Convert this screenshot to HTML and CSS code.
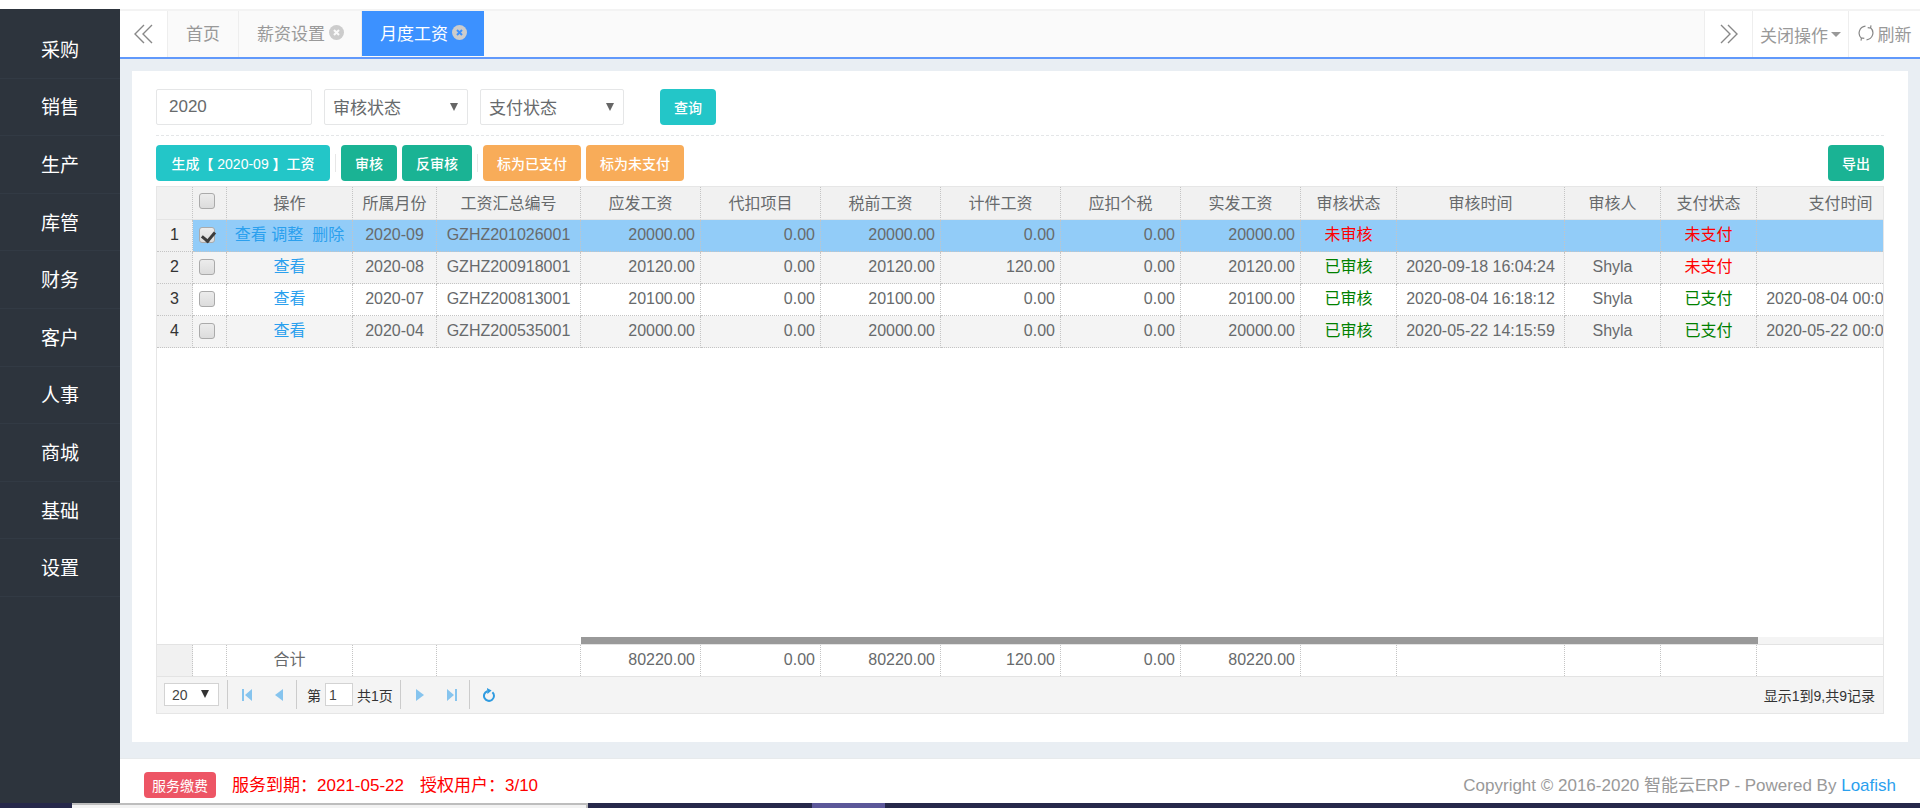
FILE: index.html
```
<!DOCTYPE html>
<html lang="zh-CN">
<head>
  <meta charset="UTF-8">
  <meta name="viewport" content="width=device-width, initial-scale=1.0">
  <title>智能云ERP - 月度工资</title>
  <link rel="stylesheet" href="styles.css">
</head>
<body>
  <div class="app">
    <nav class="sidebar">
      <ul>
        <li><a href="#">采购</a></li>
        <li><a href="#">销售</a></li>
        <li><a href="#">生产</a></li>
        <li><a href="#">库管</a></li>
        <li><a href="#">财务</a></li>
        <li><a href="#">客户</a></li>
        <li><a href="#">人事</a></li>
        <li><a href="#">商城</a></li>
        <li><a href="#">基础</a></li>
        <li><a href="#">设置</a></li>
      </ul>
    </nav>

    <div class="page">
      <header class="tabs">
        <button class="tab-btn roll-left" aria-label="向左">
          <svg width="20" height="20" viewBox="0 0 20 20"><path d="M10 1L1 10l9 9M18 1l-9 9 9 9"/></svg>
        </button>
        <a class="tab" href="#">首页</a>
        <a class="tab" href="#">薪资设置<svg class="close" width="15" height="15" viewBox="0 0 15 15"><circle cx="7.5" cy="7.5" r="7.5"/><path d="M5 5l5 5M10 5l-5 5"/></svg></a>
        <a class="tab active" href="#">月度工资<svg class="close" width="15" height="15" viewBox="0 0 15 15"><circle cx="7.5" cy="7.5" r="7.5"/><path d="M5 5l5 5M10 5l-5 5"/></svg></a>
        <div class="spacer"></div>
        <button class="tab-btn roll-right" aria-label="向右">
          <svg width="20" height="20" viewBox="0 0 20 20"><path d="M2 1l9 9-9 9M9 1l9 9-9 9"/></svg>
        </button>
        <button class="tab-btn close-ops">关闭操作<span class="caret"></span></button>
        <button class="tab-btn refresh">
          <svg width="16" height="16" viewBox="0 0 16 16"><path d="M7.5 1.2A6.9 6.9 0 0 0 3.4 13.2M3 15.6l.5-2.6 2.8.4M8.5 14.8A6.9 6.9 0 0 0 12.6 2.8M13 .4L12.5 3l-2.8-.4"/></svg>刷新
        </button>
      </header>

      <main class="content">
        <div class="panel">
          <form class="search">
            <input class="field" type="text" value="2020" aria-label="年份">
            <span class="select-box">
              <select aria-label="审核状态"><option>审核状态</option><option>未审核</option><option>已审核</option></select>
            </span>
            <span class="select-box">
              <select aria-label="支付状态"><option>支付状态</option><option>未支付</option><option>已支付</option></select>
            </span>
            <button type="button" class="btn info query">查询</button>
          </form>

          <div class="toolbar">
            <button class="btn info generate">生成【 2020-09 】工资</button>
            <i class="sep"></i>
            <button class="btn primary">审核</button>
            <button class="btn primary">反审核</button>
            <i class="sep"></i>
            <button class="btn warning">标为已支付</button>
            <button class="btn warning">标为未支付</button>
            <button class="btn primary export">导出</button>
          </div>

          <div class="grid">
            <div class="grid-view">
              <table>
                <colgroup>
                  <col class="w-num"><col class="w-check"><col class="w-ops"><col class="w-month"><col class="w-code">
                  <col class="w-money" span="6"><col class="w-state"><col class="w-time"><col class="w-state"><col class="w-state"><col class="w-time">
                </colgroup>
                <thead>
                  <tr>
                    <th></th>
                    <th><input type="checkbox" aria-label="全选"></th>
                    <th>操作</th>
                    <th>所属月份</th>
                    <th>工资汇总编号</th>
                    <th>应发工资</th>
                    <th>代扣项目</th>
                    <th>税前工资</th>
                    <th>计件工资</th>
                    <th>应扣个税</th>
                    <th>实发工资</th>
                    <th>审核状态</th>
                    <th>审核时间</th>
                    <th>审核人</th>
                    <th>支付状态</th>
                    <th>支付时间</th>
                  </tr>
                </thead>
                <tbody>
                  <tr class="selected">
                    <td class="num">1</td>
                    <td><input type="checkbox" aria-label="选择第1行" checked></td>
                    <td><a href="#">查看</a> <a href="#">调整</a>&nbsp; <a href="#">删除</a></td>
                    <td>2020-09</td>
                    <td>GZHZ201026001</td>
                    <td class="money">20000.00</td>
                    <td class="money">0.00</td>
                    <td class="money">20000.00</td>
                    <td class="money">0.00</td>
                    <td class="money">0.00</td>
                    <td class="money">20000.00</td>
                    <td class="red">未审核</td>
                    <td></td>
                    <td></td>
                    <td class="red">未支付</td>
                    <td></td>
                  </tr>
                  <tr>
                    <td class="num">2</td>
                    <td><input type="checkbox" aria-label="选择第2行"></td>
                    <td><a href="#">查看</a></td>
                    <td>2020-08</td>
                    <td>GZHZ200918001</td>
                    <td class="money">20120.00</td>
                    <td class="money">0.00</td>
                    <td class="money">20120.00</td>
                    <td class="money">120.00</td>
                    <td class="money">0.00</td>
                    <td class="money">20120.00</td>
                    <td class="green">已审核</td>
                    <td>2020-09-18 16:04:24</td>
                    <td>Shyla</td>
                    <td class="red">未支付</td>
                    <td></td>
                  </tr>
                  <tr>
                    <td class="num">3</td>
                    <td><input type="checkbox" aria-label="选择第3行"></td>
                    <td><a href="#">查看</a></td>
                    <td>2020-07</td>
                    <td>GZHZ200813001</td>
                    <td class="money">20100.00</td>
                    <td class="money">0.00</td>
                    <td class="money">20100.00</td>
                    <td class="money">0.00</td>
                    <td class="money">0.00</td>
                    <td class="money">20100.00</td>
                    <td class="green">已审核</td>
                    <td>2020-08-04 16:18:12</td>
                    <td>Shyla</td>
                    <td class="green">已支付</td>
                    <td>2020-08-04 00:00:00</td>
                  </tr>
                  <tr>
                    <td class="num">4</td>
                    <td><input type="checkbox" aria-label="选择第4行"></td>
                    <td><a href="#">查看</a></td>
                    <td>2020-04</td>
                    <td>GZHZ200535001</td>
                    <td class="money">20000.00</td>
                    <td class="money">0.00</td>
                    <td class="money">20000.00</td>
                    <td class="money">0.00</td>
                    <td class="money">0.00</td>
                    <td class="money">20000.00</td>
                    <td class="green">已审核</td>
                    <td>2020-05-22 14:15:59</td>
                    <td>Shyla</td>
                    <td class="green">已支付</td>
                    <td>2020-05-22 00:00:00</td>
                  </tr>
                </tbody>
              </table>
            </div>
            <div class="scroll-track"><div class="scroll-thumb"></div></div>
            <div class="grid-total">
              <table>
                <colgroup>
                  <col class="w-num"><col class="w-check"><col class="w-ops"><col class="w-month"><col class="w-code">
                  <col class="w-money" span="6"><col class="w-state"><col class="w-time"><col class="w-state"><col class="w-state"><col class="w-time">
                </colgroup>
                <tbody>
                  <tr>
                    <td class="num"></td>
                    <td></td>
                    <td>合计</td>
                    <td></td>
                    <td></td>
                    <td class="money">80220.00</td>
                    <td class="money">0.00</td>
                    <td class="money">80220.00</td>
                    <td class="money">120.00</td>
                    <td class="money">0.00</td>
                    <td class="money">80220.00</td>
                    <td></td>
                    <td></td>
                    <td></td>
                    <td></td>
                    <td></td>
                  </tr>
                </tbody>
              </table>
            </div>
            <div class="pager">
              <span class="select-box small">
                <select aria-label="每页条数"><option>20</option><option>50</option></select>
              </span>
              <i class="line"></i>
              <button aria-label="首页"><svg width="12" height="12" viewBox="0 0 12 12"><path d="M1 0h2v12H1zM11 0v12L4 6z"/></svg></button>
              <button aria-label="上一页"><svg width="12" height="12" viewBox="0 0 12 12"><path d="M10 0v12L2 6z"/></svg></button>
              <i class="line"></i>
              <label class="page-no">第<input type="text" value="1">共1页</label>
              <i class="line"></i>
              <button aria-label="下一页"><svg width="12" height="12" viewBox="0 0 12 12"><path d="M2 0v12l8-6z"/></svg></button>
              <button aria-label="末页"><svg width="12" height="12" viewBox="0 0 12 12"><path d="M9 0h2v12H9zM1 0v12l7-6z"/></svg></button>
              <i class="line"></i>
              <button class="reload" aria-label="刷新"><svg width="14" height="14" viewBox="0 0 14 14"><path class="ring" d="M10.4 4.2A5 5 0 1 1 5.2 3.2"/><path d="M5 0l4.6 2.6L5.4 6z"/></svg></button>
              <span class="page-info">显示1到9,共9记录</span>
            </div>
          </div>
        </div>
      </main>

      <footer class="footer">
        <button class="pay">服务缴费</button>
        <span class="notice">服务到期：2021-05-22</span>
        <span class="notice">授权用户：3/10</span>
        <span class="copyright">Copyright © 2016-2020 智能云ERP - Powered By <a href="#">Loafish</a></span>
      </footer>
    </div>
  </div>
  <div class="taskbar">
    <div class="task-window"></div>
    <div class="task-active"></div>
  </div>
</body>
</html>
```
FILE: styles.css
```
* {
  box-sizing: border-box;
}
body {
  margin: 0;
  padding-top: 9px;
  min-height: 100vh;
  display: flex;
  flex-direction: column;
  overflow: hidden;
  background: #fff;
  color: #676a6c;
  font-family: "Liberation Sans", "Noto Sans CJK SC", sans-serif;
  font-size: 17px;
}
a {
  color: #2ba0ee;
  text-decoration: none;
}
button, input, select {
  font-family: inherit;
  margin: 0;
}
button {
  cursor: pointer;
}
.app {
  flex: 1;
  display: flex;
}

/* sidebar */
.sidebar {
  width: 120px;
  flex: none;
  background: #2d343d;
}
.sidebar ul {
  list-style: none;
  margin: 0;
  padding: 12px 0 0;
  height: 588px;
  display: flex;
  flex-direction: column;
}
.sidebar li {
  flex: 1;
  border-bottom: 1px solid #323a44;
}
.sidebar a {
  display: flex;
  height: 100%;
  align-items: center;
  justify-content: center;
  padding-bottom: 2px;
  color: #fff;
  font-size: 19px;
}
.page {
  flex: 1;
  min-width: 0;
  display: flex;
  flex-direction: column;
  background: #e9eef3;
}

/* tabs */
.tabs {
  height: 50px;
  display: flex;
  background: #fafafa;
  border-top: 2px solid #f3f3f3;
  border-bottom: 2px solid #6199fb;
}
.tab {
  display: flex;
  align-items: center;
  padding: 0 18px 3px;
  border-right: 1px solid #eee;
  color: #999;
}
.tab .close {
  margin-left: 4px;
  margin-right: -1px;
}
.close circle {
  fill: #ccc;
}
.close path {
  stroke: #fafafa;
  stroke-width: 2;
}
.tab.active {
  margin-bottom: 1px;
  padding-bottom: 2px;
  background: #3c91ff;
  border-right: 0;
  color: #fff;
}
.tab.active .close path {
  stroke: #3c91ff;
}
.spacer {
  flex: 1;
}
.tab-btn {
  display: flex;
  align-items: center;
  justify-content: center;
  padding: 0;
  border: 0;
  border-left: 1px solid #eee;
  background: #fff;
  color: #999;
  font-size: 17px;
  white-space: nowrap;
}
.tab-btn svg {
  fill: none;
  stroke: #888;
  stroke-width: 1.4;
}
.roll-left {
  width: 48px;
  border-left: 0;
  border-right: 1px solid #eee;
}
.roll-right {
  width: 48px;
}
.close-ops {
  width: 96px;
}
.refresh {
  width: 72px;
  gap: 4px;
  padding-bottom: 2px;
}
.tab-btn.refresh svg {
  stroke-width: 1.2;
}
.caret {
  margin-left: 3px;
  border: 5px solid transparent;
  border-top-color: #999;
  border-bottom: 0;
}

/* panel */
.content {
  flex: 1;
  display: flex;
  padding: 12px 12px 16px;
}
.panel {
  flex: 1;
  min-width: 0;
  display: flex;
  flex-direction: column;
  padding: 18px 24px 28px;
  background: #fff;
}
.search {
  display: flex;
  gap: 12px;
  padding-bottom: 10px;
  border-bottom: 1px dashed #e4e6e8;
}
.field {
  width: 156px;
  height: 36px;
  padding: 0 12px;
  border: 1px solid #e5e6e7;
  border-radius: 2px;
  color: #676a6c;
  font-size: 17px;
}
.select-box {
  position: relative;
  display: inline-flex;
}
.select-box select {
  appearance: none;
  width: 144px;
  height: 36px;
  padding: 2px 8px 0;
  border: 1px solid #e5e6e7;
  border-radius: 2px;
  background: #fff;
  color: #676a6c;
  font-size: 17px;
}
.select-box::after {
  content: "";
  position: absolute;
  right: 10px;
  top: 14px;
  border: 4px solid transparent;
  border-top: 8px solid #666;
  border-bottom: 0;
  pointer-events: none;
}
.btn {
  height: 36px;
  padding: 0 14px;
  border: 0;
  border-radius: 4px;
  color: #fff;
  font-size: 14px;
  font-weight: 500;
}
.info {
  background: #23c6c8;
}
.primary {
  background: #1ab394;
}
.warning {
  background: #f8ac59;
}
.query {
  margin-left: 24px;
}
.toolbar {
  display: flex;
  align-items: center;
  gap: 5px;
  padding: 9px 0 5px;
}
.generate {
  min-width: 174px;
}
.sep {
  width: 1px;
  height: 18px;
  background: #e7e7e7;
}
.export {
  margin-left: auto;
}

/* data grid */
.grid {
  flex: 1;
  display: flex;
  flex-direction: column;
  border: 1px solid #e6e6e6;
}
.grid-view {
  flex: 1;
  overflow: hidden;
}
.grid-total {
  overflow: hidden;
  border-top: 1px solid #e3e3e3;
  border-bottom: 1px solid #e3e3e3;
}
table {
  width: 1768px;
  table-layout: fixed;
  border-collapse: separate;
  border-spacing: 0;
  font-size: 16px;
  line-height: 20px;
}
.w-num { width: 36px; }
.w-check { width: 34px; }
.w-ops { width: 126px; }
.w-month { width: 84px; }
.w-code { width: 144px; }
.w-money { width: 120px; }
.w-state { width: 96px; }
.w-time { width: 168px; }
th, td {
  height: 32px;
  padding: 0 5px 2px;
  border-right: 1px dotted #c4c4c4;
  border-bottom: 1px dotted #c4c4c4;
  font-weight: normal;
  text-align: center;
  white-space: nowrap;
}
th {
  height: 33px;
  padding: 2px 5px 0;
  background: #f1f1f1;
  border-bottom: 1px solid #e4e4e4;
}
tr:nth-child(even) td {
  background: #f4f4f4;
}
tr.selected td {
  background: #92ccf8;
}
tr td.num {
  background: #f1f1f1;
  color: #333;
}
td:nth-child(2) {
  padding: 0 0 2px 6px;
}
th:nth-child(2) {
  padding: 0 0 4px 6px;
}
.grid-total td {
  height: 31px;
  border-bottom: 0;
}
.money {
  text-align: right;
}
.red {
  color: #f00;
}
.green {
  color: #008000;
}
input[type="checkbox"] {
  appearance: none;
  display: block;
  position: relative;
  width: 16px;
  height: 16px;
  margin: 0;
  border: 1px solid #aaa;
  border-radius: 3px;
  background: linear-gradient(#ececec, #dcdcdc);
}
input[type="checkbox"]:checked::after {
  content: "";
  position: absolute;
  left: 4px;
  top: 1px;
  width: 6px;
  height: 10px;
  border: solid #3c3c3c;
  border-width: 0 3px 3px 0;
  transform: rotate(40deg);
}
.scroll-track {
  height: 7px;
  margin-left: 424px;
  background: #f4f4f4;
}
.scroll-thumb {
  width: calc(100% - 125px);
  height: 100%;
  background: #999;
}

/* pager */
.pager {
  height: 36px;
  display: flex;
  align-items: center;
  padding: 0 8px 1px 7px;
  background: #f4f4f4;
  color: #333;
  font-size: 14px;
}
.select-box.small {
  margin-right: 2px;
}
.select-box.small select {
  width: 55px;
  height: 23px;
  padding: 0 7px;
  border-color: #d3d3d3;
  border-radius: 0;
  color: #444;
  font-size: 14px;
}
.select-box.small::after {
  top: 7px;
  border-top-color: #333;
}
.line {
  width: 1px;
  height: 29px;
  margin: 0 8px 0 6px;
  background: #ccc;
}
.pager button {
  display: flex;
  align-items: center;
  justify-content: center;
  width: 22px;
  height: 22px;
  padding: 0;
  border: 0;
  background: none;
}
.pager button + button {
  margin-left: 10px;
}
.pager button svg {
  fill: #86c4ee;
}
.pager button.reload svg {
  fill: #2f9be0;
}
.pager .reload .ring {
  fill: none;
  stroke: #2f9be0;
  stroke-width: 2;
}
.page-no {
  display: flex;
  align-items: center;
  gap: 4px;
  padding: 0 1px 0 2px;
}
.page-no input {
  width: 28px;
  height: 23px;
  padding: 0 3px;
  border: 1px solid #d3d3d3;
  color: #444;
  font-size: 14px;
}
.page-info {
  margin-left: auto;
}

/* footer */
.footer {
  height: 45px;
  display: flex;
  align-items: center;
  padding: 7px 24px 0;
  background: #fff;
  border-top: 1px solid #e7eaec;
}
.pay {
  width: 72px;
  height: 26px;
  padding: 0;
  border: 0;
  border-radius: 4px;
  background: #ed5565;
  color: #fff;
  font-size: 14px;
}
.notice {
  margin-left: 16px;
  padding-bottom: 3px;
  color: #f00;
}
.copyright {
  margin-left: auto;
  padding-bottom: 3px;
  color: #999;
}
.taskbar {
  height: 5px;
  display: flex;
  background: #26284a;
}
.task-window {
  width: 516px;
  margin-left: 72px;
  background: #f2f2f2;
  border-top: 2px solid #bdbdbd;
  border-right: 2px solid #bdbdbd;
}
.task-active {
  width: 73px;
  margin-left: 224px;
  background: #5b5799;
}
```
